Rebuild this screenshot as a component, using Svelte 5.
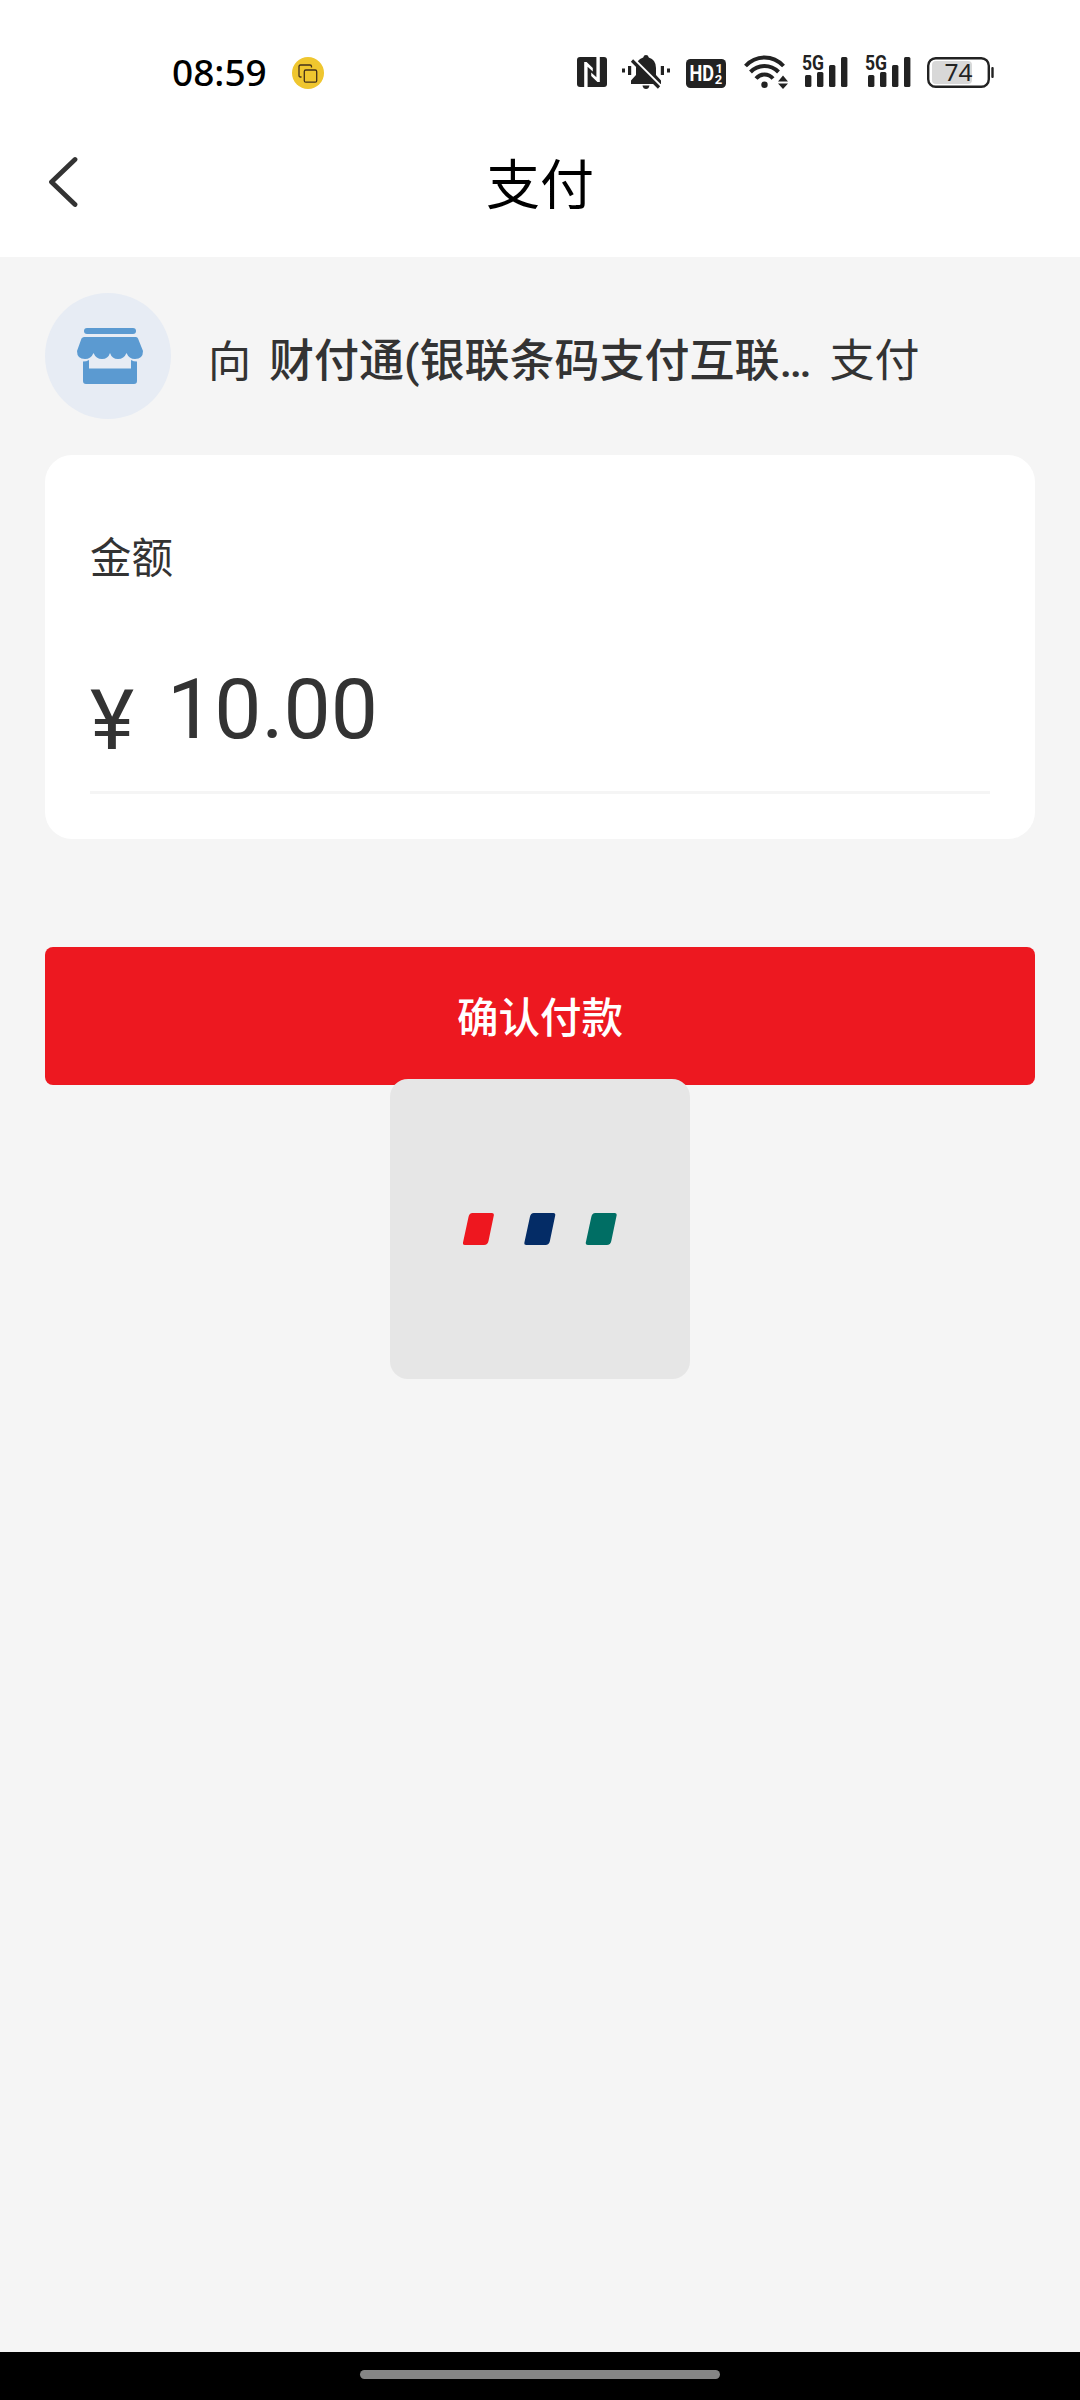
<script lang="ts">
	let merchant = $state('财付通(银联条码支付互联…');
	let amount = $state('10.00');

	const loaderColors = ['#ee171f', '#042c66', '#006e64'];
	const bars = [
		{ x: 3, y: 20, h: 12 },
		{ x: 15, y: 17, h: 15 },
		{ x: 27, y: 10, h: 22 },
		{ x: 39, y: 2, h: 30 }
	];
</script>

{#snippet signal()}
	<svg class="signal" width="48" height="40" viewBox="0 -6 48 40">
		<text x="0" y="15" font-size="20" font-weight="700" textLength="22" lengthAdjust="spacingAndGlyphs">5G</text>
		{#each bars as bar}
			<rect x={bar.x} y={bar.y} width="6.4" height={bar.h} rx="1.5" />
		{/each}
	</svg>
{/snippet}

<div class="screen">
	<div class="status">
		<span class="time">08:59</span>
		<svg class="badge" width="32" height="32" viewBox="0 0 32 32">
			<circle cx="16" cy="16" r="16" fill="#efc62f" />
			<g fill="none" stroke="#43301a" stroke-width="1.3">
				<path d="M9.500 20h-1q-1.500 0-1.500-1.500V9.500Q7 8 8.500 8h9.500q1.500 0 1.500 1.500v1" />
				<rect x="12.300" y="13" width="12.400" height="12.200" rx="1.500" />
			</g>
		</svg>

		<svg class="nfc" width="30" height="30" viewBox="0 0 30 30">
			<rect width="30" height="30" rx="3" />
			<path d="M7.200 30V5h2.400l6.200 6v3.600L10.600 9.800V30zM22.800 0v25h-2.400l-6.200-6v-3.600l5.200 4.800V0z" fill="#fff" />
		</svg>
		<svg class="bell" width="48" height="34" viewBox="0 0 48 34">
			<path d="M24 0q2.200 0 2.800 2.400Q34 4.500 34 13v7l5 5.500V29H9v-3.500l5-5.500v-7Q14 4.500 21.200 2.400 21.800 0 24 0z" />
			<path d="M20.500 30.500h7Q26.800 34 24 34t-3.500-3.500z" />
			<path d="M0 13.500h3v4H0zM6 11h3.200v9H6zM38.800 11H42v9h-3.200zM45 13.500h3v4h-3z" />
			<path d="M12 4.500 39 31.500" stroke="#fff" stroke-width="3" />
			<path d="M10 5.500 37 32.500" stroke="#222" stroke-width="3.200" />
		</svg>
		<svg class="hd" width="40" height="29" viewBox="0 0 40 29">
			<rect width="40" height="29" rx="4.500" />
			<g fill="#fff" font-weight="700">
				<text x="3.500" y="21.500" font-size="21.500" textLength="24.500" lengthAdjust="spacingAndGlyphs">HD</text>
				<text x="29.500" y="13.500" font-size="13">1</text>
				<text x="28.800" y="25" font-size="13">2</text>
			</g>
		</svg>
		<svg class="wifi" width="44" height="34" viewBox="0 0 44 34">
			<g fill="none" stroke="#222" stroke-width="4">
				<path d="M1.500 11Q9.500 2.500 20.500 2.500T39.500 11" />
				<path d="M6.500 17q6-6 14-6t14 6" />
				<path d="M12 23.500q3.500-4 8.500-4t8.500 4" />
			</g>
			<circle cx="20.500" cy="29.700" r="3.200" />
			<path d="M39 20.500l5 6H34zM34 28.500h10l-5 5.500z" />
		</svg>
		{@render signal()}
		{@render signal()}
		<svg class="battery" width="68" height="31" viewBox="0 0 68 31">
			<rect x="5" y="4" width="40" height="23" rx="4" fill="#d8d8d8" />
			<rect x="1.200" y="1.200" width="60.600" height="28.600" rx="7.500" fill="none" stroke="#222" stroke-width="2.400" />
			<rect x="64.300" y="10" width="2.400" height="11" rx="1" />
			<text x="17.500" y="24" font-size="23.500" textLength="28" lengthAdjust="spacingAndGlyphs" class="level">74</text>
		</svg>
	</div>

	<header>
		<svg width="30" height="52" viewBox="0 0 30 52">
			<path d="M27 3.500 3.500 26 27 48.500" fill="none" stroke="#333" stroke-width="4.800" stroke-linecap="round" stroke-linejoin="round" />
		</svg>
		<h1>支付</h1>
	</header>

	<main>
		<div class="payee">
			<div class="avatar">
				<svg width="66" height="56" viewBox="0 0 66 56" fill="#5b9ad1">
					<rect x="7" y="0" width="52" height="6" rx="3" />
					<path d="M7 9h52q1.500 0 2 1.500L66 23q0 8-8 8-6 0-8.500-6-2.500 6-8.500 6t-8-6q-2 6-8 6t-8.500-6Q14 31 8 31q-8 0-8-8l4.500-12.500Q5.500 9 7 9z" />
					<path d="M6 33.500q3.500 0 6-1.500v8.500h42V32q2.500 1.500 6 1.500V53q0 3-3 3H9q-3 0-3-3z" />
				</svg>
			</div>
			<span class="to">向</span>
			<strong>{merchant}</strong>
			<span>支付</span>
		</div>

		<section class="card">
			<div class="label">金额</div>
			<div class="amount">
				<span class="yen">¥</span>
				<span class="value">{amount}</span>
			</div>
		</section>

		<div class="action">
			<button type="button">确认付款</button>
			<div class="loader">
				<svg width="154" height="32" viewBox="0 0 154 32">
					{#each loaderColors as color, i}
						<path transform="translate({i * 61.4} 0)" fill={color} d="M9.500 0H29q2.300 0 1.800 2.500L25.500 28q-.8 4-4.500 4H2q-2.500 0-2-2.500L5.500 4Q6.300 0 9.500 0z" />
					{/each}
				</svg>
			</div>
		</div>
	</main>

	<div class="nav"><div class="pill"></div></div>
</div>

<style>
	:global(body) {
		margin: 0;
		background: #f5f5f5;
	}

	.screen {
		display: flex;
		flex-direction: column;
		width: 1080px;
		height: 2400px;
		overflow: hidden;
		background: #f5f5f5;
		color: #333;
		font-family: Roboto, 'Noto Sans CJK SC', sans-serif;
	}

	svg {
		display: block;
		flex: none;
	}

	.status {
		display: flex;
		align-items: flex-start;
		box-sizing: border-box;
		height: 130px;
		padding: 55px 0 0 172px;
		background: #fff;
		fill: #222;
	}

	.time {
		width: 120px;
		margin-top: -8px;
		color: #000;
		font: 500 37px/50px 'Noto Sans', sans-serif;
		white-space: nowrap;
	}

	.badge {
		margin-top: 2px;
	}

	.nfc {
		margin: 2px 15px 0 253px;
	}

	.hd {
		margin: 4px 18px 0 16px;
	}

	.wifi {
		margin-right: 14px;
	}

	.signal {
		margin-top: -6px;
		margin-right: 15px;
	}

	.battery {
		margin: 2px 0 0 -1px;
	}

	.level {
		font-family: 'Noto Sans', sans-serif;
	}

	header {
		display: grid;
		grid-template-columns: 1fr auto 1fr;
		align-items: start;
		box-sizing: border-box;
		height: 127px;
		padding: 26px 48px 0;
		background: #fff;
	}

	h1 {
		margin: -9px 0 0;
		color: #000;
		font-size: 54px;
		font-weight: 400;
		line-height: 80px;
	}

	main {
		flex: 1;
		padding: 36px 45px 0;
	}

	.payee {
		display: flex;
		align-items: center;
		height: 126px;
		font-size: 45px;
		line-height: 66px;
		white-space: nowrap;
	}

	.payee span,
	.payee strong {
		margin-top: 11px;
	}

	.payee .to {
		width: 43px;
		font-size: 43px;
	}

	.payee strong {
		margin-left: 18px;
		margin-right: 18px;
		font-weight: 500;
	}

	.avatar {
		display: flex;
		align-items: center;
		justify-content: center;
		width: 126px;
		height: 126px;
		margin-right: 37px;
		padding-left: 3px;
		box-sizing: border-box;
		border-radius: 50%;
		background: #e7ecf4;
	}

	.card {
		box-sizing: border-box;
		height: 384px;
		margin-top: 36px;
		padding: 73px 45px 0;
		border-radius: 27px;
		background: #fff;
	}

	.label {
		font-size: 41.5px;
		line-height: 62px;
	}

	.amount {
		display: flex;
		box-sizing: border-box;
		height: 204px;
		padding-top: 71px;
		border-bottom: 3px solid #f5f5f5;
		font-size: 84px;
		line-height: 98px;
	}

	.yen {
		width: 77px;
		margin-top: 11px;
	}

	.action {
		position: relative;
		margin-top: 108px;
	}

	button {
		display: block;
		width: 100%;
		height: 138px;
		padding: 6px 0 0;
		border: 0;
		border-radius: 8px;
		background: #ed1820;
		color: #fff;
		font: inherit;
		font-size: 41.5px;
		font-weight: 500;
		line-height: 62px;
	}

	.loader {
		position: absolute;
		top: 132px;
		left: 345px;
		display: flex;
		align-items: center;
		justify-content: center;
		width: 300px;
		height: 300px;
		border-radius: 18px;
		background: #e6e6e6;
	}

	.nav {
		display: flex;
		align-items: center;
		justify-content: center;
		height: 48px;
		background: #000;
	}

	.pill {
		width: 360px;
		height: 9px;
		margin-bottom: 3px;
		border-radius: 5px;
		background: #858585;
	}
</style>
